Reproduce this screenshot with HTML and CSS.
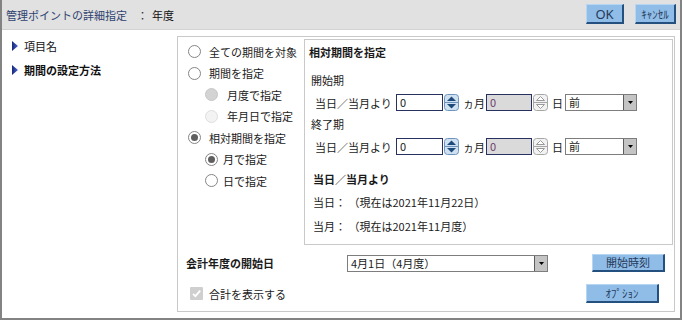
FILE: index.html
```html
<!DOCTYPE html>
<html lang="ja">
<head>
    <meta charset="UTF-8">
    <title>管理ポイントの詳細指定</title>
    <link rel="stylesheet" href="styles.css">
</head>
<body>
    <div class="window">
        <div class="titlebar">
            <span class="title">管理ポイントの詳細指定</span>
            <span class="title-sep">：</span>
            <span class="title-value">年度</span>
            <div class="title-buttons">
                <button class="btn btn-ok">OK</button>
                <button class="btn btn-cancel">ｷｬﾝｾﾙ</button>
            </div>
        </div>

        <div class="content">
            <ul class="nav">
                <li>
                    <svg class="nav-arrow" width="6" height="10" viewBox="0 0 6 10"><defs><linearGradient id="ag" x1="0" y1="0" x2="1" y2="0"><stop offset="0" stop-color="#16287a"/><stop offset="1" stop-color="#4c63c9"/></linearGradient></defs><path d="M0 0 L6 5 L0 10 Z" fill="url(#ag)"/></svg>
                    項目名
                </li>
                <li class="active">
                    <svg class="nav-arrow" width="6" height="10" viewBox="0 0 6 10"><path d="M0 0 L6 5 L0 10 Z" fill="url(#ag)"/></svg>
                    期間の設定方法
                </li>
            </ul>

            <div class="panel">
                <div class="panel-top">
                    <div class="period-options">
                        <div class="opt"><span class="radio"></span>全ての期間を対象</div>
                        <div class="opt"><span class="radio"></span>期間を指定</div>
                        <div class="opt sub wide"><span class="radio disabled"></span>月度で指定</div>
                        <div class="opt sub wide"><span class="radio disabled light"></span>年月日で指定</div>
                        <div class="opt"><span class="radio checked"></span>相対期間を指定</div>
                        <div class="opt sub"><span class="radio checked"></span>月で指定</div>
                        <div class="opt sub"><span class="radio"></span>日で指定</div>
                    </div>

                    <div class="range-box">
                        <div class="range-title">相対期間を指定</div>

                        <div class="range-label first">開始期</div>
                        <div class="range-row">
                            <span class="row-label">当日／当月より</span>
                            <span class="num-input">0</span>
                            <svg class="spin" width="15" height="17" viewBox="0 0 15 17"><rect x="0.5" y="0.5" width="14" height="16" rx="3" fill="#cfe0f1" stroke="#6e94bd"/><line x1="1" y1="8.5" x2="14" y2="8.5" stroke="#6e94bd"/><path d="M3 7 L7.5 2.5 L12 7 Z" fill="#1d4a7b"/><path d="M3 10 L7.5 14.5 L12 10 Z" fill="#1d4a7b"/></svg>
                            <span class="unit">ヵ月</span>
                            <span class="num-input disabled">0</span>
                            <svg class="spin" width="15" height="17" viewBox="0 0 15 17"><rect x="0.5" y="0.5" width="14" height="16" rx="3" fill="#f2f2f2" stroke="#a6a6a6"/><line x1="1" y1="8.5" x2="14" y2="8.5" stroke="#a6a6a6"/><path d="M3.5 6.5 L7.5 2.5 L11.5 6.5 Z" fill="#fff" stroke="#9a9a9a"/><path d="M3.5 10.5 L7.5 14.5 L11.5 10.5 Z" fill="#fff" stroke="#9a9a9a"/></svg>
                            <span class="unit day">日</span>
                            <div class="select small">
                                <span class="select-text">前</span>
                                <span class="select-btn"><svg width="5" height="3" viewBox="0 0 5 3"><path d="M0 0 H5 L2.5 3 Z" fill="#000"/></svg></span>
                            </div>
                        </div>

                        <div class="range-label">終了期</div>
                        <div class="range-row">
                            <span class="row-label">当日／当月より</span>
                            <span class="num-input">0</span>
                            <svg class="spin" width="15" height="17" viewBox="0 0 15 17"><rect x="0.5" y="0.5" width="14" height="16" rx="3" fill="#cfe0f1" stroke="#6e94bd"/><line x1="1" y1="8.5" x2="14" y2="8.5" stroke="#6e94bd"/><path d="M3 7 L7.5 2.5 L12 7 Z" fill="#1d4a7b"/><path d="M3 10 L7.5 14.5 L12 10 Z" fill="#1d4a7b"/></svg>
                            <span class="unit">ヵ月</span>
                            <span class="num-input disabled">0</span>
                            <svg class="spin" width="15" height="17" viewBox="0 0 15 17"><rect x="0.5" y="0.5" width="14" height="16" rx="3" fill="#f2f2f2" stroke="#a6a6a6"/><line x1="1" y1="8.5" x2="14" y2="8.5" stroke="#a6a6a6"/><path d="M3.5 6.5 L7.5 2.5 L11.5 6.5 Z" fill="#fff" stroke="#9a9a9a"/><path d="M3.5 10.5 L7.5 14.5 L11.5 10.5 Z" fill="#fff" stroke="#9a9a9a"/></svg>
                            <span class="unit day">日</span>
                            <div class="select small">
                                <span class="select-text">前</span>
                                <span class="select-btn"><svg width="5" height="3" viewBox="0 0 5 3"><path d="M0 0 H5 L2.5 3 Z" fill="#000"/></svg></span>
                            </div>
                        </div>

                        <div class="info-title">当日／当月より</div>
                        <div class="info-line">当日：<span class="info-now">（現在は2021年11月22日）</span></div>
                        <div class="info-line">当月：<span class="info-now">（現在は2021年11月度）</span></div>
                    </div>
                </div>

                <div class="fiscal-row">
                    <span class="fiscal-label">会計年度の開始日</span>
                    <div class="select wide">
                        <span class="select-text">4月1日（4月度）</span>
                        <span class="select-btn"><svg width="5" height="3" viewBox="0 0 5 3"><path d="M0 0 H5 L2.5 3 Z" fill="#000"/></svg></span>
                    </div>
                    <button class="btn btn-side">開始時刻</button>
                </div>

                <div class="total-row">
                    <span class="checkbox"><svg width="13" height="13" viewBox="0 0 13 13"><path d="M3 6.8 L5.4 9.2 L10.2 3.6" fill="none" stroke="#fff" stroke-width="1.8"/></svg></span>
                    <span class="total-label">合計を表示する</span>
                    <button class="btn btn-side">ｵﾌﾟｼｮﾝ</button>
                </div>
            </div>
        </div>
    </div>
</body>
</html>
```

FILE: styles.css
```css
* {
    margin: 0;
    padding: 0;
    box-sizing: border-box;
}

body {
    font-family: 'Noto Sans CJK JP', 'Noto Sans', sans-serif;
    font-size: 11px;
    color: #1a1a1a;
    background-color: #ffffff;
}

.window {
    width: 682px;
    height: 320px;
    display: flex;
    flex-direction: column;
    border: 2px solid #838383;
    border-top: none;
    background-color: #ffffff;
}

/* タイトルバー */
.titlebar {
    height: 30px;
    display: flex;
    align-items: center;
    padding: 0 4px 0 4px;
    background-color: #e1e1e1;
    border-bottom: 1px solid #d2d2d2;
}

.title {
    color: #2f4270;
}

.title-sep {
    margin-left: 10px;
    color: #333333;
}

.title-value {
    margin-left: 4px;
    color: #111111;
}

.title-buttons {
    margin-left: auto;
    display: flex;
    gap: 11px;
    padding-bottom: 1px;
}

.btn {
    font-family: 'Noto Sans CJK JP', sans-serif;
    font-size: 11px;
    color: #26395a;
    background-color: #8fbde7;
    border: 1px solid;
    border-color: #b6d6f2 #24507f #24507f #b6d6f2;
    border-right-width: 2px;
    border-bottom-width: 2px;
    cursor: pointer;
}

.btn-ok {
    width: 38px;
    height: 20px;
    font-family: 'Noto Sans', sans-serif;
    font-size: 13px;
    line-height: 16px;
}

.btn-cancel {
    width: 41px;
    height: 20px;
    line-height: 16px;
}

/* 左メニュー */
.content {
    flex: 1;
    display: flex;
}

.nav {
    width: 175px;
    list-style: none;
    padding: 4px 0 0 10px;
}

.nav li {
    height: 24px;
    display: flex;
    align-items: center;
    color: #111111;
}

.nav li.active {
    font-weight: bold;
}

.nav-arrow {
    margin-right: 6px;
}

/* メインパネル */
.panel {
    width: 498px;
    height: 276px;
    margin-top: 6px;
    border: 1px solid #c9c9c9;
}

.panel-top {
    display: flex;
}

.period-options {
    width: 126px;
    padding: 4px 0 0 10px;
}

.opt {
    height: 21.5px;
    display: flex;
    align-items: center;
    white-space: nowrap;
}

.opt.sub {
    padding-left: 17px;
}

.radio {
    width: 13px;
    height: 13px;
    margin-right: 8px;
    border: 1px solid #858585;
    border-radius: 50%;
    background-color: #ffffff;
    flex-shrink: 0;
    display: flex;
    align-items: center;
    justify-content: center;
}

.opt.sub .radio {
    margin-right: 5px;
}

.opt.sub.wide .radio {
    margin-right: 9px;
}

.radio.checked::after {
    content: "";
    width: 7px;
    height: 7px;
    border-radius: 50%;
    background-color: #5f5f5f;
}

.radio.disabled {
    border-color: #c6c6c6;
    background-color: #d3d3d3;
}

.radio.disabled.light {
    border-color: #dedede;
    background-color: #f3f3f3;
}

/* 相対期間 */
.range-box {
    width: 369px;
    height: 206px;
    margin-top: 2px;
    border: 1px solid #c9c9c9;
    padding: 1px 0 0 4px;
}

.range-title {
    line-height: 22px;
    font-weight: bold;
}

.range-label {
    line-height: 20px;
    margin-top: 3px;
    padding-left: 2px;
}

.range-label.first {
    margin-top: 7px;
}

.range-row {
    height: 17px;
    margin-top: 4px;
    padding-left: 6px;
    display: flex;
    align-items: center;
}

.row-label {
    width: 81px;
}

.num-input {
    width: 47px;
    height: 17px;
    padding-left: 3px;
    line-height: 15px;
    border: 1px solid #27305e;
    background-color: #ffffff;
}

.num-input.disabled {
    width: 46px;
    background-color: #dadada;
    color: #6b3a6b;
}

.spin {
    margin-left: 1px;
    flex-shrink: 0;
}

.unit {
    width: 27px;
    padding-left: 4px;
}

.unit.day {
    width: 17px;
    padding-left: 4px;
}

.select {
    height: 17px;
    display: flex;
    border: 1px solid #7d7d7d;
    background-color: #ffffff;
}

.select.small {
    width: 72px;
}

.select.wide {
    width: 201px;
}

.select-text {
    flex: 1;
    padding-left: 3px;
    line-height: 15px;
}

.select-btn {
    width: 13px;
    display: flex;
    align-items: center;
    justify-content: center;
    background-color: #c4c4c4;
    border-left: 1px solid #5c5c5c;
}

.info-title {
    line-height: 20px;
    margin-top: 14px;
    padding-left: 4px;
    font-weight: bold;
}

.info-line {
    line-height: 20px;
    margin-top: 3px;
    padding-left: 4px;
}

.info-line:last-child {
    margin-top: 4px;
}

.info-now {
    margin-left: 8px;
}

/* 下部 */
.fiscal-row {
    height: 18px;
    margin-top: 9px;
    padding-left: 8px;
    display: flex;
    align-items: center;
}

.fiscal-label {
    width: 161px;
    font-weight: bold;
}

.btn-side {
    width: 73px;
    height: 19px;
    margin-left: 44px;
    line-height: 15px;
}

.fiscal-row .btn-side {
    height: 18px;
}

.total-row {
    height: 19px;
    margin-top: 12px;
    padding-left: 12px;
    display: flex;
    align-items: center;
}

.checkbox {
    width: 13px;
    height: 13px;
    display: flex;
    background-color: #cfcfcf;
    border-radius: 1px;
}

.total-label {
    width: 383px;
    padding-left: 6px;
}

.total-row .btn-side {
    margin-left: 0;
}
```
